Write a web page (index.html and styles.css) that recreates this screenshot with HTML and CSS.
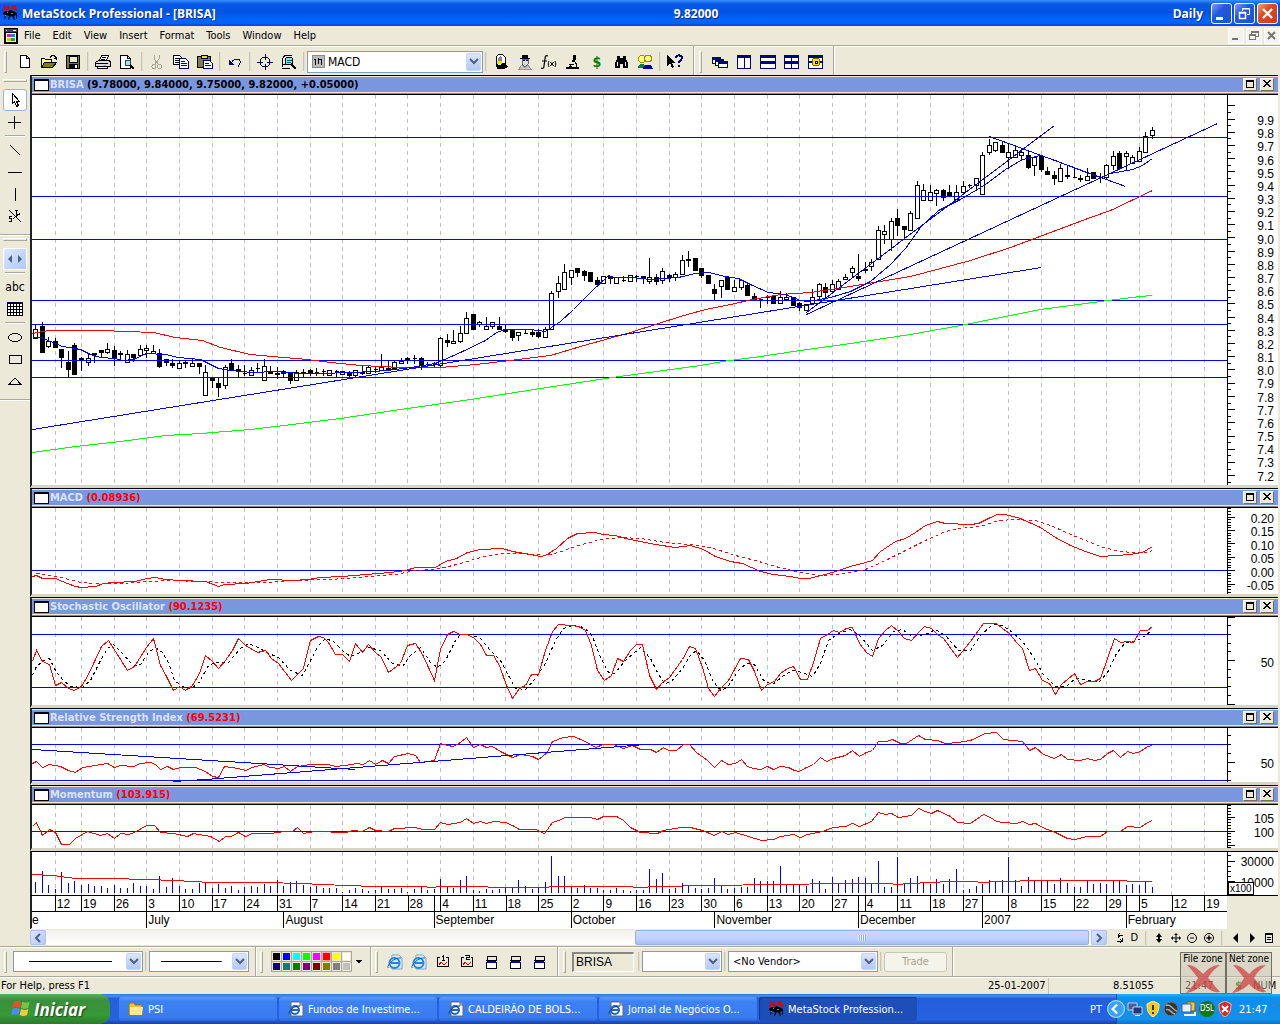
FILE: index.html
```
<!DOCTYPE html>
<html lang="en">
  <head>
    <meta charset="UTF-8" />
    <meta name="viewport" content="width=device-width, initial-scale=1.0" />
    <title>MetaStock Professional - [BRISA]</title>
    <link rel="stylesheet" href="styles.css">
  </head>
  <body>
    <!-- shared icons -->
    <svg class="defs" aria-hidden="true">
      <symbol id="i-ms" viewBox="0 0 16 16">
        <path d="M2.500 7V1l2 3 2-3v5M14 1h-3.500v2.500H14V6" fill="none" stroke="#e00000" stroke-width="1.500" />
        <path d="M1 8l3-2 2 1 2-2 3 1 4 2v5l-1 1v-4l-2 1 1 4h-1l-2-4-2 1-1 3H6l1-4-3-1-1 4H2l1-4-2-1z" fill="#000" />
        <path d="M5 7h1v1H5zM9 8h2v1H9zM3 10h1v1H3z" fill="#4aa" />
      </symbol>
      <symbol id="i-down" viewBox="0 0 10 8"><path d="M1 1l4 4 4-4" fill="none" stroke="#4d6185" stroke-width="2" /></symbol>
      <symbol id="i-max" viewBox="0 0 14 13"><path d="M3.500 2.500h7v7h-7zM3 3.500h8" fill="none" stroke="#000" /></symbol>
      <symbol id="i-close" viewBox="0 0 14 13"><path d="M3 2l7 7M4 2l7 7M10 2L3 9M11 2L4 9" fill="none" stroke="#000" /></symbol>
      <symbol id="i-ie" viewBox="0 0 16 16">
        <path d="M3 1h9l3 3v11H3z" fill="#fff" stroke="#667" /><path d="M12 1v3h3" fill="#ccd" stroke="#667" />
        <ellipse cx="7" cy="9" rx="4" ry="4" fill="#fff" stroke="#1f66c8" stroke-width="2" />
        <path d="M4 9h7" stroke="#1f66c8" stroke-width="2" /><path d="M1 13C0 10 7 4 12 5" fill="none" stroke="#103c90" />
      </symbol>
      <symbol id="i-iebig" viewBox="0 0 16 16">
        <path d="M5 1h7l3 3v11H5z" fill="#dcecfa" stroke="#7aa7d0" />
        <circle cx="7.500" cy="9" r="5" fill="#cfe8fb" stroke="#2d85cf" stroke-width="2" />
        <path d="M4 9h8" stroke="#2d85cf" stroke-width="2" /><path d="M1 14C0 10 8 3 14 4" fill="none" stroke="#2468a8" />
      </symbol>
      <symbol id="i-win" viewBox="0 0 16 16">
        <path d="M3.500 2.500h10v12h-10z" fill="#fff" stroke="#000" /><path d="M2.500 1.500h12v6h-12z" fill="#ece9d8" stroke="none" /><path d="M4.500 7V2.500h9V7" fill="#ece9d8" stroke="#000" /><path d="M3 6h11v1H3z" fill="#000" /><path d="M4 7h9v2H4z" fill="#0000c0" />
      </symbol>
      <symbol id="i-x" viewBox="0 0 40 30">
        <path d="M4 1c6 0 9 2 16 9C26 4 30 1 37 1c-5 4-9 7-12 13 4 5 8 9 12 14-7 1-12-3-17-8-5 5-10 8-17 9 4-5 9-9 12-15C11 9 8 5 4 1z" fill="#d03a3a" />
      </symbol>
    </svg>

    <header class="titlebar">
      <div class="title-left"><svg class="icon"><use href="#i-ms" /></svg><h1>MetaStock Professional - [BRISA]</h1></div>
      <span>9.82000</span>
      <div class="title-right">
        <span>Daily</span>
        <button class="win-btn" aria-label="Minimize"><svg viewBox="0 0 19 19"><path d="M4 13h7v3H4z" fill="#fff" /></svg></button>
        <button class="win-btn" aria-label="Restore"><svg viewBox="0 0 19 19"><path d="M7.500 7V4.500h7v6H12M7 5h8" fill="none" stroke="#fff" /><path d="M4.500 8.500h6v6h-6zM4 9h7" fill="none" stroke="#fff" stroke-width="1.500" /></svg></button>
        <button class="win-btn win-close" aria-label="Close"><svg viewBox="0 0 19 19"><path d="M5 5l9 9M14 5l-9 9" stroke="#fff" stroke-width="2.300" /></svg></button>
      </div>
    </header>

    <nav class="menubar">
      <svg class="icon crisp" viewBox="0 0 16 16"><path d="M1 0h14v16H1z" fill="#000" /><path d="M2 1h12v3H2z" fill="#404060" /><path d="M3 2h1v1H3zM10 2h3v1h-3z" fill="#fff" /><path d="M3 5h10v9H3z" fill="#fff" /><path d="M4 6h4v3H4z" fill="#e020a0" /><path d="M8 6h4v3H8z" fill="#2080e0" /><path d="M4 10h4v3H4z" fill="#d0c020" /><path d="M8 10h4v3H8z" fill="#20a040" /></svg>
      <button>File</button><button>Edit</button><button>View</button><button>Insert</button><button>Format</button><button>Tools</button><button>Window</button><button>Help</button>
      <div class="mdi-btns">
        <button aria-label="Minimize chart"><svg class="crisp" viewBox="0 0 14 14"><path d="M3 9h6v2H3z" fill="#77776c" /></svg></button>
        <button aria-label="Restore chart"><svg class="crisp" viewBox="0 0 14 14"><path d="M4.500 5V2.500h7v5H9M4 3.500h8M2.500 6.500h6v4h-6zM2 5.500h7" fill="none" stroke="#77776c" /></svg></button>
        <button aria-label="Close chart"><svg viewBox="0 0 14 14"><path d="M3 3l7 7M10 3l-7 7" stroke="#77776c" stroke-width="2" /></svg></button>
      </div>
    </nav>

    <div class="toolrow">
      <div class="toolbar">
        <i class="grip"></i>
        <button class="tool" aria-label="New"><svg class="crisp" viewBox="0 0 16 16"><path d="M3.500 1.500h6l3 3v9h-9zM9.500 1.500v3h3" fill="#fff" stroke="#000" /></svg></button>
        <button class="tool" aria-label="Open"><svg class="crisp" viewBox="0 0 16 16"><path d="M.5 13.500v-9h3l1 1h6v3" fill="#ffffa0" stroke="#000" /><path d="M.5 13.500l3-5h12l-4 5z" fill="#808000" stroke="#000" /><path d="M9 3.500l2-2h2l2 2v2M13 4.500h2" fill="none" stroke="#000" /></svg></button>
        <button class="tool" aria-label="Save"><svg class="crisp" viewBox="0 0 16 16"><path d="M1.500 1.500h13v13h-13z" fill="#808000" stroke="#000" /><path d="M4 2h8v6H4z" fill="#ece9d8" stroke="#000" /><path d="M4 10h9v4H4z" fill="#000" /><path d="M10 11h2v3h-2z" fill="#fff" /></svg></button>
        <i class="sep"></i>
        <button class="tool" aria-label="Print"><svg class="crisp" viewBox="0 0 16 16"><path d="M4.500 6.500l2-5h7l-2 5z" fill="#fff" stroke="#000" /><path d="M.5 8.500l3-2h11l1 2v4h-15z" fill="#ddd" stroke="#000" /><path d="M7 3h4M6 5h4M1 9.500h12M3 12h9" stroke="#000" /><path d="M2.500 12.500h10v2h-10z" fill="#fff" stroke="#000" /><path d="M9 11h2v1H9z" fill="#cc0" /></svg></button>
        <button class="tool" aria-label="Print preview"><svg class="crisp" viewBox="0 0 16 16"><path d="M1.500 1.500h7l3 3v10h-10zM8.500 1.500v3h3" fill="#fff" stroke="#000" /><circle cx="9" cy="9" r="3" fill="#a0e8f0" stroke="#444" /><path d="M11 11l4 4" stroke="#000" stroke-width="2" /></svg></button>
        <i class="sep"></i>
        <button class="tool" aria-label="Cut"><svg class="crisp" viewBox="0 0 16 16"><path d="M5 1v4l5 6M10 1v4l-5 6" fill="none" stroke="#aca899" /><circle cx="5" cy="12.500" r="2" fill="none" stroke="#aca899" /><circle cx="10.500" cy="12.500" r="2" fill="none" stroke="#aca899" /></svg></button>
        <button class="tool" aria-label="Copy"><svg class="crisp" viewBox="0 0 16 16"><path d="M.5 1.500h6l2 2v7h-8z" fill="#fff" stroke="#000" /><path d="M2 4h4M2 6h4M2 8h4" stroke="#000" /><path d="M6.500 4.500h6l3 3v7h-9z" fill="#fff" stroke="#000080" /><path d="M8 7.500h4M8 9.500h6M8 11.500h6" stroke="#000080" /></svg></button>
        <button class="tool" aria-label="Paste"><svg class="crisp" viewBox="0 0 16 16"><path d="M.5 2.500h13v11H.5z" fill="#808040" stroke="#000" /><path d="M4 1h6v3H4z" fill="#e8e040" stroke="#000" /><path d="M6.500 6.500h6l3 3v5h-9z" fill="#fff" stroke="#000080" /><path d="M8 9.500h4M8 11.500h6" stroke="#000080" /></svg></button>
        <i class="sep"></i>
        <button class="tool" aria-label="Undo"><svg class="crisp" viewBox="0 0 16 16"><path d="M4 9c2-4 8-5 9-2 1 3-1 4-2 6" fill="none" stroke="#000080" /><path d="M2 6v5h5z" fill="#000080" /></svg></button>
        <i class="sep"></i>
        <button class="tool" aria-label="Crosshair"><svg class="crisp" viewBox="0 0 16 16"><circle cx="8" cy="8" r="5" fill="none" stroke="#000040" /><path d="M8 0v6M8 10v6M0 8h6M10 8h6" stroke="#000040" /></svg></button>
        <button class="tool" aria-label="Zoom"><svg class="crisp" viewBox="0 0 16 16"><path d="M1 13V6l3-5h7M1 14h8M1 10h4" fill="none" stroke="#000" /><circle cx="8" cy="7" r="4" fill="#80e8e8" stroke="#000" /><path d="M6 6h5M6 8h4" stroke="#066" /><path d="M10 10l5 5" stroke="#000" stroke-width="2" /></svg></button>
        <i class="sep"></i>
        <div class="combo combo-indicator">
          <svg class="crisp" viewBox="0 0 14 14"><path d="M.5 .5h13v13H.5z" fill="#bbb" stroke="#888" /><path d="M3.500 4v7M6.500 3v7M7.500 5h2M10.500 4v7M2 5h2" stroke="#000" fill="none" /></svg>
          <select aria-label="Indicator"><option>MACD</option></select>
          <span class="combo-arrow"><svg><use href="#i-down" /></svg></span>
        </div>
        <i class="sep"></i>
        <button class="tool" aria-label="Expert"><svg class="crisp" viewBox="0 0 16 16"><path d="M3 3l3-3h3l3 3v6H3z" fill="#fff" stroke="#000" /><path d="M5 4l2-2 2 2v6H5z" fill="#888" /><path d="M4 7h5v3H4z" fill="#e8e000" /><path d="M3 10l4 1 4-2 4 4-4 2H4z" fill="#000" /></svg></button>
        <button class="tool" aria-label="Explorer"><svg class="crisp" viewBox="0 0 16 16"><path d="M5 1h6v3H5zM3 4h10v1H3z" fill="#000" /><path d="M5 5h6v5l-2 2H7l-2-2z" fill="#ddd" stroke="#666" /><path d="M6 6h2v1H6zM9 6h2v1H9z" fill="#008" /><path d="M2 15l3-4 3 3 3-3 3 4z" fill="#ccc8b8" stroke="#999" /></svg></button>
        <button class="tool" aria-label="Indicator builder"><svg viewBox="0 0 16 16"><path d="M7 2c-2-1-3 0-3 3l-1 7c0 2-1 3-3 2M1 7h5" fill="none" stroke="#000" stroke-width="1.200" /><path d="M8 7c-1 2-1 4 0 6M14 7c1 2 1 4 0 6M9.500 8l3 4M12.500 8l-3 4" fill="none" stroke="#000" /></svg></button>
        <button class="tool" aria-label="System tester"><svg class="crisp" viewBox="0 0 16 16"><path d="M8 1h3v3l-1 4H7l1-4zM10 8l2 2v3h-1v-3L9 9zM4 10h5v1H4zM5 11l2 2H3zM1 13h13v2H1z" fill="#000" /></svg></button>
        <button class="tool tool-money" aria-label="OptionScope">$</button>
        <button class="tool" aria-label="Find"><svg class="crisp" viewBox="0 0 16 16"><path d="M4 2h3v2h3V2h3v3l2 4v5h-5v-4H7v4H2V9l2-4z" fill="#000" /><path d="M4 8h1v4H4zM12 8h1v4h-1z" fill="#fff" /></svg></button>
        <button class="tool" aria-label="Users"><svg class="crisp" viewBox="0 0 16 16"><circle cx="5" cy="5" r="3.500" fill="#ffff80" stroke="#a09000" /><circle cx="11" cy="4.500" r="3.500" fill="#ffff80" stroke="#a09000" /><path d="M1 14c0-5 5-5 8-2v2z" fill="#008040" /><path d="M6 15c0-6 9-6 10 0z" fill="#0000a0" /></svg></button>
        <i class="sep"></i>
        <button class="tool" aria-label="Context help"><svg class="crisp" viewBox="0 0 16 16"><path d="M0 1v11l3-3 2 5 2-1-2-4h3z" fill="#000" /><path d="M9 4c0-4 6-3 6 0 0 2-3 2-3 5M12 11v2" fill="none" stroke="#000080" stroke-width="2" /></svg></button>
      </div>
      <div class="toolbar toolbar-end">
        <i class="grip"></i>
        <button class="tool" aria-label="Cascade"><svg class="crisp" viewBox="0 0 16 16"><g fill="#fff" stroke="#000080"><path d="M.5 3.500h8v6h-8z" /><path d="M3.500 5.500h8v6h-8z" /><path d="M6.500 7.500h9v6h-9z" /></g><path d="M0 3h9v3H0zM3 5h9v3H3zM6 7h10v3H6z" fill="#000080" /></svg></button>
        <button class="tool" aria-label="Stack columns"><svg class="crisp" viewBox="0 0 16 16"><path d="M1.500 1.500h13v13h-13zM8 2v12" fill="#fff" stroke="#000080" /><path d="M1 1h14v3H1z" fill="#000080" /></svg></button>
        <button class="tool" aria-label="Stack rows"><svg class="crisp" viewBox="0 0 16 16"><path d="M.5 1.500h15v13H.5z" fill="#fff" stroke="#000080" /><path d="M0 1h16v3H0zM0 7h16v3H0z" fill="#000080" /></svg></button>
        <button class="tool" aria-label="Tile"><svg class="crisp" viewBox="0 0 16 16"><path d="M.5 1.500h14v13H.5zM7.500 2v12" fill="#fff" stroke="#000080" /><path d="M0 1h15v3H0zM0 7h15v3H0z" fill="#000080" /></svg></button>
        <button class="tool" aria-label="Layout options"><svg class="crisp" viewBox="0 0 16 16"><path d="M.5 1.500h14v13H.5z" fill="#fff" stroke="#000080" /><path d="M0 1h15v3H0zM0 7h15v2H0z" fill="#000080" /><circle cx="8" cy="8" r="4" fill="#f0e020" stroke="#806000" /><path d="M7 7h2v2H7z" fill="#fff" stroke="#000" /></svg></button>
      </div>
    </div>

    <main class="workspace">
      <aside class="sidebar">
        <div class="side-group">
          <i class="hgrip"></i>
          <button class="side selected" aria-label="Pointer"><svg class="crisp" viewBox="0 0 16 16"><path d="M5.500 1.500v10l2-2 2 5 2-1-2-4h3z" fill="#fff" stroke="#000" /></svg></button>
          <button class="side" aria-label="Crosshair"><svg class="crisp" viewBox="0 0 16 16"><path d="M1 8.500h13M7.500 2v13" stroke="#000" /></svg></button>
          <i class="hsep"></i>
          <button class="side" aria-label="Trendline"><svg class="crisp" viewBox="0 0 16 16"><path d="M3 3l10 10" stroke="#000" /></svg></button>
          <button class="side" aria-label="Horizontal line"><svg class="crisp" viewBox="0 0 16 16"><path d="M1 8.500h14" stroke="#000" /></svg></button>
          <button class="side" aria-label="Vertical line"><svg class="crisp" viewBox="0 0 16 16"><path d="M8.500 2v13" stroke="#000" /></svg></button>
          <button class="side" aria-label="Speed lines"><svg class="crisp" viewBox="0 0 16 16"><path d="M2 2l12 12M13 5L6 11M9.500 2v4M9 6.500h4M8 2.500h3M5 8.500H2.500v2h2v3H2" fill="none" stroke="#000" /></svg></button>
        </div>
        <div class="side-group">
          <i class="hgrip"></i>
          <button class="side pressed" aria-label="Scroll"><svg viewBox="0 0 16 16"><path d="M5 4v8L1 8zM11 4v8l4-4z" fill="#4d6185" /></svg></button>
          <i class="hsep"></i>
          <button class="side side-text">abc</button>
          <button class="side" aria-label="Grid"><svg class="crisp" viewBox="0 0 16 16"><path d="M.5 1.500h15v13H.5zM3.500 2v12M6.500 2v12M9.500 2v12M12.500 2v12M0 5.500h16M0 8.500h16M0 11.500h16" fill="#fff" stroke="#000" /><path d="M0 1h16v2H0z" fill="#000040" /></svg></button>
          <i class="hsep"></i>
          <button class="side" aria-label="Ellipse"><svg class="crisp" viewBox="0 0 16 16"><ellipse cx="8" cy="8.500" rx="6.500" ry="4" fill="none" stroke="#000" /></svg></button>
          <button class="side" aria-label="Rectangle"><svg class="crisp" viewBox="0 0 16 16"><path d="M2.500 4.500h12v8h-12z" fill="none" stroke="#000" /></svg></button>
          <button class="side" aria-label="Triangle"><svg class="crisp" viewBox="0 0 16 16"><path d="M8 5l-6 6.500h12z" fill="none" stroke="#000" /></svg></button>
        </div>
      </aside>

      <section class="charts">
        <article class="panel panel-price">
          <header class="panel-head"><i class="panel-icon"></i><h2>BRISA <b class="quote">(9.78000, 9.84000, 9.75000, 9.82000, +0.05000)</b></h2><button aria-label="Maximize"><svg class="crisp"><use href="#i-max" /></svg></button><button aria-label="Close"><svg class="crisp"><use href="#i-close" /></svg></button></header>
          <div class="panel-body"><svg class="plot" id="price"></svg><div class="axis"><svg class="ticks"></svg><div class="labels" id="priceLabels"></div></div></div>
        </article>
        <article class="panel panel-macd">
          <header class="panel-head"><i class="panel-icon"></i><h2>MACD <b>(0.08936)</b></h2><button aria-label="Maximize"><svg class="crisp"><use href="#i-max" /></svg></button><button aria-label="Close"><svg class="crisp"><use href="#i-close" /></svg></button></header>
          <div class="panel-body"><svg class="plot" id="macd"></svg><div class="axis"><svg class="ticks"></svg><div class="labels"><span>0.20</span><span>0.15</span><span>0.10</span><span>0.05</span><span>0.00</span><span>-0.05</span></div></div></div>
        </article>
        <article class="panel panel-stoch">
          <header class="panel-head"><i class="panel-icon"></i><h2>Stochastic Oscillator <b>(90.1235)</b></h2><button aria-label="Maximize"><svg class="crisp"><use href="#i-max" /></svg></button><button aria-label="Close"><svg class="crisp"><use href="#i-close" /></svg></button></header>
          <div class="panel-body"><svg class="plot" id="stoch"></svg><div class="axis"><svg class="ticks"></svg><div class="labels"><span>50</span></div></div></div>
        </article>
        <article class="panel panel-rsi">
          <header class="panel-head"><i class="panel-icon"></i><h2>Relative Strength Index <b>(69.5231)</b></h2><button aria-label="Maximize"><svg class="crisp"><use href="#i-max" /></svg></button><button aria-label="Close"><svg class="crisp"><use href="#i-close" /></svg></button></header>
          <div class="panel-body"><svg class="plot" id="rsi"></svg><div class="axis"><svg class="ticks"></svg><div class="labels"><span>50</span></div></div></div>
        </article>
        <article class="panel panel-momentum">
          <header class="panel-head"><i class="panel-icon"></i><h2>Momentum <b>(103.915)</b></h2><button aria-label="Maximize"><svg class="crisp"><use href="#i-max" /></svg></button><button aria-label="Close"><svg class="crisp"><use href="#i-close" /></svg></button></header>
          <div class="panel-body"><svg class="plot" id="momentum"></svg><div class="axis"><svg class="ticks"></svg><div class="labels"><span>105</span><span>100</span></div></div></div>
        </article>
        <article class="panel panel-volume">
          <div class="panel-body"><svg class="plot" id="volume"></svg><div class="axis"><svg class="ticks"></svg><div class="labels"><span>30000</span><span>10000</span></div><span class="multiplier">x100</span></div></div>
        </article>
        <div class="dates">
          <div class="date-row" id="weeks"></div>
          <div class="date-row" id="months"></div>
        </div>

        <div class="scroll-row">
          <button class="scroll-btn" aria-label="Scroll left"><svg viewBox="0 0 8 10"><path d="M6 1L2 5l4 4" fill="none" stroke="#4d6185" stroke-width="2" /></svg></button>
          <div class="scroll-track"><div class="scroll-thumb"><i></i></div></div>
          <button class="scroll-btn" aria-label="Scroll right"><svg viewBox="0 0 8 10"><path d="M2 1l4 4-4 4" fill="none" stroke="#4d6185" stroke-width="2" /></svg></button>
          <div class="scroll-tools">
            <button aria-label="Refresh"><svg class="crisp" viewBox="0 0 12 12"><path d="M9 3H4v3M3 9h5V6M6 1l-2 2 2 2M6 7l2 2-2 2" fill="none" stroke="#000" /></svg></button>
            <button class="daily">D</button>
            <i class="sep"></i>
            <button aria-label="Vertical scale"><svg viewBox="0 0 12 12"><path d="M6 1l3 4H7v2h2l-3 4-3-4h2V5H3z" fill="#000" /></svg></button>
            <button aria-label="Move"><svg viewBox="0 0 12 12"><path d="M6 2v8M2 6h8" stroke="#000" /><path d="M6 1l2 2H4zM6 11l2-2H4zM1 6l2-2v4zM11 6L9 4v4z" fill="#000" /></svg></button>
            <button aria-label="Zoom out"><svg viewBox="0 0 12 12"><circle cx="6" cy="6" r="4.500" fill="none" stroke="#000" /><path d="M4 6h4" stroke="#000" /></svg></button>
            <button aria-label="Zoom in"><svg viewBox="0 0 12 12"><circle cx="6" cy="6" r="4.500" fill="none" stroke="#000" /><path d="M3.500 6h5M6 3.500v5" stroke="#000" stroke-width="1.500" /></svg></button>
            <i class="sep"></i>
            <button aria-label="Previous"><svg viewBox="0 0 12 12"><path d="M8 1v10L3 6z" fill="#000" /></svg></button>
            <button aria-label="Next"><svg viewBox="0 0 12 12"><path d="M4 1v10l5-5z" fill="#000" /></svg></button>
            <button aria-label="Chart list"><svg class="crisp" viewBox="0 0 12 12"><path d="M2.500 1.500h7v9h-7zM2 2.500h8M4 5.500h4M4 7.500h4" fill="none" stroke="#000" /></svg></button>
          </div>
        </div>
      </section>
    </main>

    <div class="toolrow toolrow-bottom">
      <div class="toolbar">
        <i class="grip"></i>
        <div class="combo combo-line"><select aria-label="Line style"><option></option></select><span class="combo-arrow"><svg><use href="#i-down" /></svg></span></div>
        <i class="sep"></i>
        <div class="combo combo-weight"><select aria-label="Line weight"><option></option></select><span class="combo-arrow"><svg><use href="#i-down" /></svg></span></div>
      </div>
      <div class="toolbar toolbar-colors">
        <i class="grip"></i>
        <div class="palette">
          <button class="c-black" aria-label="Black"></button><button class="c-blue" aria-label="Blue"></button><button class="c-cyan" aria-label="Cyan"></button><button class="c-lime" aria-label="Lime"></button><button class="c-magenta" aria-label="Magenta"></button><button class="c-red current" aria-label="Red"></button><button class="c-yellow" aria-label="Yellow"></button><button class="c-white" aria-label="White"></button>
          <button class="c-navy" aria-label="Navy"></button><button class="c-teal" aria-label="Teal"></button><button class="c-green" aria-label="Green"></button><button class="c-purple" aria-label="Purple"></button><button class="c-maroon" aria-label="Maroon"></button><button class="c-olive" aria-label="Olive"></button><button class="c-gray" aria-label="Gray"></button><button class="c-silver" aria-label="Silver"></button>
        </div>
        <button class="more" aria-label="More colors"><svg class="crisp" viewBox="0 0 6 4"><path d="M0 0h6L3 4z" fill="#000" /></svg></button>
      </div>
      <div class="toolbar toolbar-web">
        <i class="grip"></i>
        <button class="tool" aria-label="Web page"><svg><use href="#i-iebig" /></svg></button>
        <button class="tool" aria-label="Web search"><svg><use href="#i-iebig" /></svg></button>
        <button class="tool" aria-label="Chart 1"><svg class="crisp" viewBox="0 0 16 16"><path d="M5 3.500H2.500v9h11v-9H11M8.500 1v5M7 2.500h1M7 6.500h3" fill="none" stroke="#000" /><path d="M4 11l2-3 3 3 3-3" fill="none" stroke="#d00000" /></svg></button>
        <button class="tool" aria-label="Chart 2"><svg class="crisp" viewBox="0 0 16 16"><path d="M5 3.500H2.500v9h11v-9H12M6 1.500h4v2H7.500v2H11" fill="none" stroke="#000" /><path d="M4 11l2-3 3 3 3-3" fill="none" stroke="#d00000" /></svg></button>
        <button class="tool" aria-label="Window 1"><svg class="crisp"><use href="#i-win" /></svg></button>
        <button class="tool" aria-label="Window 2"><svg class="crisp"><use href="#i-win" /></svg></button>
        <button class="tool" aria-label="Window 3"><svg class="crisp"><use href="#i-win" /></svg></button>
      </div>
      <div class="toolbar toolbar-end">
        <i class="grip"></i>
        <input class="symbol" type="text" value="BRISA" aria-label="Symbol">
        <i class="sep"></i>
        <div class="combo combo-small"><select aria-label="Account"><option></option></select><span class="combo-arrow"><svg><use href="#i-down" /></svg></span></div>
        <i class="sep"></i>
        <div class="combo combo-vendor"><select aria-label="Vendor"><option>&lt;No Vendor&gt;</option></select><span class="combo-arrow"><svg><use href="#i-down" /></svg></span></div>
        <i class="sep"></i>
        <button class="trade" disabled>Trade</button>
      </div>
    </div>

    <div class="statusbar">
      <span class="status-help">For Help, press F1</span>
      <span class="status-date">25-01-2007</span>
      <span class="status-price">8.51055</span>
      <span class="status-time">21:47</span>
      <span class="status-money">$</span>
      <span class="status-num">NUM</span>
      <div class="zones">
        <div class="zone"><span>File zone</span><svg><use href="#i-x" /></svg></div>
        <div class="zone"><span>Net zone</span><svg><use href="#i-x" /></svg></div>
      </div>
    </div>

    <footer class="taskbar">
      <button class="start"><svg viewBox="0 0 18 18"><path d="M3 3c2-1 4-1 6 0L8 8C6 7 4 7 2 8z" fill="#e8502c" /><path d="M10 3c2 1 4 1 6 0l-1 5c-2 1-4 1-6 0z" fill="#7cc242" /><path d="M2 9c2-1 4-1 6 0l-1 5c-2-1-4-1-6 0z" fill="#4a8df0" /><path d="M9 9c2 1 4 1 6 0l-1 5c-2 1-4 1-6 0z" fill="#f8cc30" /></svg>Iniciar</button>
      <div class="tasks">
        <button class="task"><svg class="icon" viewBox="0 0 16 16"><path d="M1 4l1-2h4l1 2h7v10H1z" fill="#f0c040" stroke="#a07810" /><path d="M2 6h13l-1 8H2z" fill="#ffe890" /></svg>PSI</button>
        <button class="task"><svg class="icon"><use href="#i-ie" /></svg>Fundos de Investime...</button>
        <button class="task"><svg class="icon"><use href="#i-ie" /></svg>CALDEIRÃO DE BOLS...</button>
        <button class="task"><svg class="icon"><use href="#i-ie" /></svg>Jornal de Negócios O...</button>
        <button class="task active"><svg class="icon"><use href="#i-ms" /></svg>MetaStock Profession...</button>
      </div>
      <span class="lang">PT</span>
      <div class="tray">
        <button class="tray-toggle" aria-label="Show hidden icons"><svg viewBox="0 0 16 16"><circle cx="8" cy="8" r="7.500" fill="#3aa0f4" stroke="#a8dcff" /><path d="M9 4L5 8l4 4" fill="none" stroke="#fff" stroke-width="2" /></svg></button>
        <svg class="icon" viewBox="0 0 16 16"><path d="M1 2h9v7H1z" fill="#4060a0" stroke="#ccd" /><path d="M6 6h9v7H6z" fill="#203880" stroke="#ccd" /><path d="M8 14h5v1H8z" fill="#ddd" /></svg>
        <svg class="icon" viewBox="0 0 16 16"><path d="M8 0l6 3c0 6-1 10-6 13C3 13 2 9 2 3z" fill="#f4c820" stroke="#fff0a0" /><path d="M7 4h2v5H7zM7 11h2v2H7z" fill="#333" /></svg>
        <svg class="icon" viewBox="0 0 16 16"><circle cx="8" cy="8" r="7" fill="#333" stroke="#777" /><path d="M3 5c3-4 8 5 11 5M3 9c3-3 6 4 9 4" fill="none" stroke="#aaa" stroke-width="1.500" /></svg>
        <svg class="icon" viewBox="0 0 16 16"><path d="M6 1h8v9H6z" fill="#f0c830" stroke="#806000" /><path d="M1 3h9v8H1z" fill="#e8f0ff" stroke="#3860a8" /><path d="M3 14h11v-3" fill="none" stroke="#fff" stroke-width="2" /></svg>
        <span class="dsl">DSL</span>
        <svg class="icon" viewBox="0 0 16 16"><path d="M8 0l6 3c0 6-1 10-6 13C3 13 2 9 2 3z" fill="#d42a2a" stroke="#ffb0a0" /><path d="M5 5l6 6M11 5l-6 6" stroke="#fff" stroke-width="2" /></svg>
        <time>21:47</time>
      </div>
    </footer>
    <script src="charts.js"></script>
  </body>
</html>
```

FILE: styles.css
```
* {
  box-sizing: border-box;
}
body {
  margin: 0;
  min-height: 100vh;
  display: flex;
  flex-direction: column;
  background-color: #ece9d8;
  font-family: "DejaVu Sans Condensed", "Liberation Sans", sans-serif;
  font-size: 11px;
  color: #000;
  overflow: hidden;
}
button,
input,
select {
  font: inherit;
  color: inherit;
  margin: 0;
  padding: 0;
  border: 0;
  background: none;
}
svg {
  display: block;
}
.defs {
  display: none;
}
.crisp {
  shape-rendering: crispEdges;
}
.icon {
  width: 16px;
  height: 16px;
  flex: none;
}

/* title bar */
.titlebar {
  height: 26px;
  display: flex;
  align-items: center;
  padding: 0 2px;
  background: linear-gradient(#3a93ff 0, #0a58e6 15%, #0054e3 45%, #0366fd 80%, #0060f4 92%, #003bc0 100%);
  color: #fff;
  font-family: "Open Sans", "Noto Sans", sans-serif;
  font-size: 12px;
  font-weight: bold;
  text-shadow: 1px 1px 0 #0a2a80;
}
.title-left {
  flex: 6 1 0;
  display: flex;
  align-items: center;
  gap: 4px;
}
.titlebar h1 {
  margin: 0;
  font-size: 12px;
}
.title-right {
  flex: 5 1 0;
  display: flex;
  align-items: center;
  justify-content: flex-end;
  gap: 2px;
}
.title-right span {
  margin-right: 6px;
}
.win-btn {
  width: 21px;
  height: 21px;
  border: 1px solid #fff;
  border-radius: 3px;
  background: linear-gradient(135deg, #7b9ef0, #2458dc 40%, #1c50d8);
}
.win-close {
  background: linear-gradient(135deg, #f0a080, #dc4a20 40%, #d03c10);
}

/* menu */
.menubar {
  height: 19px;
  display: flex;
  align-items: center;
  padding-left: 3px;
  gap: 12px;
}
.menubar .icon {
  margin-right: -7px;
}
.mdi-btns {
  margin-left: auto;
  display: flex;
  gap: 2px;
}
.mdi-btns button {
  width: 16px;
  height: 16px;
  background: #f4f3ec;
  border: 1px solid #fff;
}

/* toolbars */
.toolrow {
  height: 30px;
  display: flex;
  border-top: 1px solid #aca899;
  box-shadow: inset 0 1px 0 #fff;
  flex: none;
}
.toolbar {
  display: flex;
  align-items: center;
  padding: 2px 6px 0 4px;
  border-right: 1px solid #aca899;
  box-shadow: 1px 0 0 #fff;
}
.toolbar-end {
  padding-left: 5px;
  padding-right: 5px;
}
.grip {
  width: 3px;
  height: 22px;
  border: 1px solid #aca899;
  border-left-color: #fff;
  border-top-color: #fff;
  margin-right: 6px;
}
.sep {
  width: 2px;
  height: 19px;
  margin: 0 2px;
  background: #c9c5b2;
  border-right: 1px solid #e2dfcf;
}
.tool {
  width: 24px;
  height: 22px;
  display: flex;
  align-items: center;
  justify-content: center;
}
.tool svg {
  width: 16px;
  height: 16px;
}
.tool-money {
  color: #008000;
  font-size: 14px;
  font-weight: bold;
}
.combo {
  display: flex;
  align-items: center;
  height: 22px;
  padding: 1px;
  background: #fff;
  border: 1px solid #7f9db9;
}
.combo select {
  flex: 1;
  min-width: 0;
  height: 100%;
  padding: 0 3px;
  appearance: none;
}
.combo-arrow {
  width: 15px;
  align-self: stretch;
  display: flex;
  align-items: center;
  justify-content: center;
  background: linear-gradient(#dce6fd, #b4c8f6);
  border: 1px solid #c5d4f8;
  border-radius: 2px;
  pointer-events: none;
}
.combo-arrow svg {
  width: 10px;
  height: 8px;
}
.combo-indicator {
  width: 176px;
  padding-left: 4px;
}
.combo-indicator > svg {
  width: 13px;
  height: 13px;
}
.combo-indicator select {
  font-size: 12px;
}

/* drawing tools on the left */
.workspace {
  flex: 1;
  min-height: 0;
  display: flex;
}
.sidebar {
  width: 30px;
  padding-top: 1px;
}
.side-group {
  display: flex;
  flex-direction: column;
  align-items: center;
  padding: 3px 0 7px;
  border-bottom: 1px solid #aca899;
  box-shadow: 0 1px 0 #fff;
}
.hgrip {
  width: 24px;
  height: 3px;
  border: 1px solid #aca899;
  border-left-color: #fff;
  border-top-color: #fff;
  margin-bottom: 7px;
}
.hsep {
  width: 20px;
  height: 2px;
  margin: 2px 0;
  background: #aca899;
  border-bottom: 1px solid #fff;
}
.side {
  width: 24px;
  height: 22px;
  display: flex;
  align-items: center;
  justify-content: center;
}
.side svg {
  width: 16px;
  height: 16px;
}
.side-text {
  font-size: 12px;
}
.selected {
  background: #fff;
  border: 1px solid #98b5d8;
  border-radius: 3px;
}
.pressed {
  background: linear-gradient(135deg, #dce8ff, #b0c8f8);
  border: 1px solid #fff;
}

/* chart panels */
.charts {
  flex: 1;
  min-width: 0;
  display: flex;
  flex-direction: column;
  padding-right: 2px;
}
.panel {
  min-height: 0;
  flex-basis: 23px;
  display: flex;
  flex-direction: column;
  border-top: 1px solid #000;
  border-left: 2px solid #222;
  border-bottom: 3px solid #d8d5c5;
  background: #fff;
}
.panel-price {
  flex-grow: 390;
}
.panel-macd {
  flex-grow: 86;
}
.panel-stoch {
  flex-grow: 88;
}
.panel-rsi {
  flex-grow: 54;
}
.panel-momentum {
  flex-grow: 43;
}
.panel-volume {
  flex-basis: 2px;
  flex-grow: 43;
  border-bottom: 1px solid #000;
}
.panel-head {
  height: 19px;
  flex: none;
  display: flex;
  align-items: center;
  gap: 3px;
  padding: 0 4px 1px 2px;
  background: #7a96df;
  border-top: 1px solid #ece9d8;
  border-bottom: 1px solid #000;
  box-shadow: inset 0 -1px 0 #8a887c, inset 0 -2px 0 #ece9d8;
}
.panel-head h2 {
  flex: 1;
  margin: 0 0 0 -2px;
  font-size: 11px;
  line-height: 14px;
  color: #d8e4f8;
}
.panel-head b {
  color: #f00;
}
.panel-head .quote {
  color: #000;
}
.panel-icon {
  width: 15px;
  height: 12px;
  background: #fff;
  border: 1px solid #000;
  border-top-width: 2px;
}
.panel-head button {
  width: 14px;
  height: 13px;
  margin-bottom: 2px;
  background: #ece9d8;
  border: 1px solid #fff;
  border-right-color: #716f64;
  border-bottom-color: #716f64;
}
.panel-head button svg {
  width: 14px;
  height: 13px;
  margin: -1px;
}
.panel-body {
  flex: 1 1 0;
  min-height: 0;
  display: flex;
}
.plot {
  flex: 1 1 0;
  min-width: 0;
  min-height: 0;
  shape-rendering: crispEdges;
}
.plot line,
.plot path,
.plot polyline {
  fill: none;
  vector-effect: non-scaling-stroke;
}
.plot .grid {
  stroke: #c0c0c0;
  stroke-dasharray: 4 4;
}
.plot .blue {
  stroke: #0000ff;
}
.plot .red {
  stroke: #ff0000;
}
.plot .green {
  stroke: #00ff00;
}
.plot .black {
  stroke: #000;
}
.plot .dashed {
  stroke-dasharray: 3 3;
}
.plot .up {
  fill: #fff;
  stroke: #000;
}
.plot .down {
  fill: #000;
  stroke: #000;
}
.axis {
  width: 51px;
  position: relative;
  display: flex;
  font-family: "Liberation Sans", Arial, sans-serif;
  font-size: 12px;
  line-height: 13px;
}
.ticks {
  width: 9px;
  min-height: 0;
  shape-rendering: crispEdges;
}
.labels {
  flex: 1;
  display: flex;
  flex-direction: column;
  align-items: flex-end;
  padding-right: 4px;
}
.panel-price .labels {
  justify-content: space-between;
  padding-top: 20px;
  padding-bottom: 1px;
}
.panel-macd .labels {
  justify-content: space-between;
  padding-top: 5px;
  padding-bottom: 1px;
}
.panel-stoch .labels {
  justify-content: center;
  padding-top: 4px;
}
.panel-rsi .labels {
  padding-top: 30px;
}
.panel-momentum .labels {
  padding-top: 8px;
  gap: 1px;
}
.panel-volume .labels {
  padding-top: 4px;
  gap: 8px;
}
.multiplier {
  position: absolute;
  left: 1px;
  bottom: 0;
  padding: 0 1px;
  font-size: 10px;
  line-height: 11px;
  background: #fff;
  border: 1px solid #000;
}

/* date axis */
.dates {
  flex: none;
  margin-right: 51px;
  border-left: 2px solid #222;
  border-bottom: 1px solid #fff;
  background: #fff;
  font-family: "Liberation Sans", Arial, sans-serif;
  font-size: 12px;
}
.date-row {
  height: 16px;
  display: flex;
  line-height: 17px;
  border-bottom: 1px solid #000;
}
.date-row + .date-row {
  border-bottom: 0;
}
.date-row span {
  min-width: 0;
  flex-basis: 0;
  text-indent: 2px;
  box-shadow: inset 1px 0 0 #000;
  white-space: nowrap;
}
.date-row span:first-child {
  box-shadow: none;
  text-indent: 0;
}

/* scroll bar under the charts */
.scroll-row {
  flex: none;
  height: 17px;
  display: flex;
  align-items: center;
}
.scroll-btn {
  width: 16px;
  height: 15px;
  display: flex;
  align-items: center;
  justify-content: center;
  background: linear-gradient(135deg, #dce6fd, #b4c8f6);
  border: 1px solid #b0c4f0;
  border-radius: 2px;
}
.scroll-btn svg {
  width: 8px;
  height: 10px;
}
.scroll-track {
  flex: 1;
  height: 15px;
  display: flex;
  justify-content: flex-end;
  padding: 0 2px;
  background: linear-gradient(#f2f1ec, #fefefb);
}
.scroll-thumb {
  width: 43.6%;
  display: flex;
  align-items: center;
  justify-content: center;
  background: linear-gradient(#c8d8fc, #c0d2fc 60%, #a8bef0);
  border: 1px solid #98b0e8;
  border-radius: 2px;
}
.scroll-thumb i {
  width: 8px;
  height: 6px;
  background: repeating-linear-gradient(90deg, #eef4fe 0 1px, #8cb0f8 1px 2px);
}
.scroll-tools {
  width: 171px;
  display: flex;
  align-items: center;
  justify-content: space-between;
  padding-left: 7px;
  padding-right: 3px;
}
.scroll-tools svg {
  width: 12px;
  height: 12px;
}
.scroll-tools .sep {
  height: 14px;
}
.daily {
  font-size: 11px;
}

/* bottom toolbar */
.toolrow-bottom {
  height: 31px;
  border-bottom: 1px solid #aca899;
}
.toolrow-bottom .toolbar {
  padding-top: 0;
}
.toolrow-bottom .combo {
  height: 21px;
}
.combo-line {
  width: 130px;
}
.combo-line select,
.combo-weight select {
  background: linear-gradient(#000, #000) center / 75% 1px no-repeat;
}
.combo-weight {
  width: 100px;
}
.toolbar-colors {
  padding-right: 4px;
}
.toolbar-colors .grip {
  margin-right: 8px;
}
.palette {
  display: grid;
  grid-template-columns: repeat(8, 9px);
  gap: 1px;
  padding: 1px;
  background: #aca899;
}
.palette button {
  height: 9px;
  border: 1px solid #ece9d8;
}
.palette .current {
  border-color: #ffb0a0;
}
.c-black { background: #000; }
.c-blue { background: #00f; }
.c-cyan { background: #0ff; }
.c-lime { background: #0f0; }
.c-magenta { background: #f0f; }
.c-red { background: #f00; }
.c-yellow { background: #ff0; }
.c-white { background: #fff; }
.c-navy { background: #000080; }
.c-teal { background: #008080; }
.c-green { background: #008000; }
.c-purple { background: #800080; }
.c-maroon { background: #800000; }
.c-olive { background: #808000; }
.c-gray { background: #808080; }
.c-silver { background: #c0c0c0; }
.more {
  padding: 0 4px;
}
.more svg {
  width: 6px;
  height: 4px;
}
.toolbar-web .grip {
  margin-right: 5px;
}
.symbol {
  width: 62px;
  height: 20px;
  margin-right: 2px;
  padding-left: 2px;
  font-family: "Liberation Sans", Arial, sans-serif;
  font-size: 12px;
  border: 1px solid #fff;
  border-top: 2px solid #8a887c;
  border-left: 2px solid #8a887c;
}
.combo-small {
  width: 80px;
}
.combo-vendor {
  width: 150px;
}
.trade {
  width: 63px;
  height: 20px;
  color: #a8a595;
  background: #f5f4ea;
  border: 1px solid #c9c7ba;
  border-radius: 3px;
}

/* status bar */
.statusbar {
  height: 17px;
  flex: none;
  position: relative;
  display: flex;
  align-items: center;
  box-shadow: inset 0 1px 0 #fff;
}
.statusbar > span {
  line-height: 16px;
}
.status-help {
  flex: 1;
  padding-left: 1px;
}
.status-date {
  width: 61px;
  border-right: 1px solid #c9c5b2;
}
.status-price {
  width: 127px;
  padding-left: 64px;
}
.status-time {
  width: 59px;
  padding-left: 9px;
}
.status-money {
  width: 18px;
  color: #008000;
  font-weight: bold;
}
.status-num {
  width: 27px;
}
.zones {
  position: absolute;
  right: 8px;
  bottom: 0;
  display: flex;
}
.zone {
  width: 46px;
  height: 42px;
  background: rgba(200, 196, 180, 0.5);
  border: 1px solid #716f64;
  text-align: center;
  font-size: 10px;
  line-height: 11px;
  white-space: nowrap;
}
.zone svg {
  width: 40px;
  height: 30px;
  margin: 0 auto;
  opacity: 0.7;
}

/* task bar */
.taskbar {
  height: 30px;
  flex: none;
  display: flex;
  align-items: center;
  color: #fff;
  background: linear-gradient(#3168d5 0, #4993e6 6%, #245ddb 15%, #2663e0 85%, #1941a5 100%);
}
.start {
  width: 110px;
  height: 30px;
  display: flex;
  align-items: center;
  gap: 2px;
  padding-left: 10px;
  border-radius: 0 10px 10px 0;
  background: linear-gradient(#5cae5c 0, #3c8f3c 20%, #379a37 70%, #2c7a2c 100%);
  font-family: "Open Sans", "Noto Sans", sans-serif;
  font-size: 17px;
  font-weight: bold;
  font-style: italic;
  text-shadow: 1px 1px 2px #184018;
}
.start svg {
  width: 22px;
  height: 22px;
}
.tasks {
  flex: 1;
  min-width: 0;
  display: flex;
  gap: 2px;
  padding-left: 9px;
}
.task {
  width: 158px;
  height: 24px;
  display: flex;
  align-items: center;
  gap: 4px;
  padding-left: 9px;
  white-space: nowrap;
  overflow: hidden;
  border-radius: 3px;
  background: linear-gradient(#5c98f8, #3c81f3 20%, #3a7cf0 85%, #2b66d8);
}
.active {
  background: #1e4fb8;
  box-shadow: inset 1px 1px 1px #123a90;
}
.lang {
  padding: 4px 14px 4px 3px;
}
.tray {
  width: 164px;
  height: 30px;
  display: flex;
  align-items: center;
  gap: 2px;
  background: linear-gradient(#19b9f3 0, #0f8eea 12%, #1290ea 85%, #0f6fc8 100%);
  border-left: 1px solid #0a4fa8;
}
.tray-toggle {
  margin-left: -10px;
}
.tray-toggle svg {
  width: 18px;
  height: 18px;
}
.dsl {
  width: 16px;
  height: 16px;
  border-radius: 8px;
  background: #0a7a1a;
  font-size: 8px;
  line-height: 16px;
  text-align: center;
}
.tray time {
  margin-left: 4px;
}
```

FILE: charts.js
```
const SVG_NS = "http://www.w3.org/2000/svg";
const LEFT = 32;
const WIDTH = 1195;
const DAYS = 183;
const STEP = WIDTH / DAYS;

// first trading day of each week: [day index, label]
const weeks = [
  [3, "12"], [7, "19"], [12, "26"], [17, "3"], [22, "10"], [27, "17"], [32, "24"], [37, "31"],
  [42, "7"], [47, "14"], [52, "21"], [57, "28"], [61, ""], [62, "4"], [67, "11"], [72, "18"],
  [77, "25"], [82, "2"], [87, "9"], [92, "16"], [97, "23"], [102, "30"], [107, "6"], [112, "13"],
  [117, "20"], [122, "27"], [126, ""], [127, "4"], [132, "11"], [137, "18"], [142, "27"], [145, ""],
  [149, "8"], [154, "15"], [159, "22"], [164, "29"], [167, ""], [169, "5"], [174, "12"], [179, "19"],
];
const months = [
  [17, "July"], [38, "August"], [61, "September"], [82, "October"], [104, "November"],
  [126, "December"], [145, "2007"], [167, "February"],
];

// one candle per day: direction, high, body top, body bottom, low
const candles = `
u 325 329 338 338|d 322 326 352 352|u 337 341 346 347|d 338 341 347 347|d 349 349 357 367|d 351 362 369 377
d 343 345 374 374|d 357 358 360 370|u 354 358 362 365|d 353 353 354 362|d 350 350 352 357|u 343 349 352 353
d 346 350 358 365|d 351 353 354 359|u 350 354 362 362|d 354 354 357 361|u 345 349 355 355|u 345 348 350 357
u 345 351 353 353|d 349 353 366 367|d 359 359 362 365|d 359 363 365 367|u 360 363 368 368|d 360 362 363 367
u 359 363 366 366|d 363 363 366 373|u 365 372 395 395|d 377 378 380 387|d 377 383 387 396|u 365 367 385 388
d 359 363 370 370|d 365 369 370 377|d 365 373 373 375|u 367 370 375 375|d 363 368 368 371|u 359 366 380 380
d 366 371 373 373|d 367 373 374 378|u 370 371 373 376|d 372 372 380 383|u 370 372 380 380|d 369 372 373 377
d 369 370 372 375|d 368 372 372 375|d 369 371 371 375|u 370 370 375 375|d 370 371 371 376|u 371 371 374 374
d 371 373 375 376|u 370 370 375 377|d 365 372 373 374|u 365 367 373 373|d 367 369 369 372|u 354 367 370 370
d 360 368 370 370|u 360 362 368 368|u 358 361 363 363|d 357 358 360 363|d 355 358 358 363|d 357 358 365 369
d 362 364 364 365|d 362 364 364 366|u 337 338 365 367|d 334 340 342 346|u 330 341 343 343|u 326 333 341 342
u 312 318 333 333|d 314 314 329 329|u 321 322 324 326|u 317 326 329 329|u 322 322 326 328|d 317 326 329 329
d 325 329 331 332|d 329 329 337 340|u 332 332 335 340|d 329 333 333 333|d 329 332 334 336|d 329 332 336 337
u 327 329 337 337|u 291 293 329 329|u 276 283 291 297|u 264 272 289 289|u 270 270 277 284|d 268 268 272 276
d 270 271 275 280|d 272 272 281 281|d 277 280 284 284|u 276 276 283 283|d 276 276 278 283|u 277 277 283 283
d 276 280 280 281|u 275 275 281 281|d 275 276 276 281|d 276 276 278 283|u 258 277 281 283|d 274 277 281 284
u 268 271 280 283|d 274 275 277 281|u 272 274 277 280|u 255 260 274 274|d 251 259 260 266|d 258 258 270 270
d 268 268 275 277|d 275 275 283 283|d 284 289 293 299|u 280 280 286 297|d 277 277 289 289|u 280 287 291 291
u 280 280 287 289|d 283 285 295 295|d 293 296 299 299|d 298 299 299 307|d 295 297 297 303|d 296 296 303 303
u 291 297 303 303|u 293 297 299 300|d 297 297 305 305|d 302 303 307 310|u 304 304 310 310|u 289 297 303 303
u 283 284 296 298|d 283 287 292 298|u 280 284 291 293|u 279 281 289 289|u 274 277 279 279|u 266 268 272 277
d 254 276 278 280|u 262 269 270 272|u 259 262 266 270|u 226 230 259 259|u 225 231 234 243|u 218 221 239 250
d 209 218 225 235|d 226 226 229 237|u 211 213 230 230|u 181 185 218 218|u 184 190 200 200|u 185 192 200 200
u 189 190 193 205|d 189 190 197 200|d 185 192 196 196|u 185 192 199 199|u 181 186 192 192|d 184 185 185 187
u 178 178 185 190|u 152 155 194 194|u 139 145 152 154|u 142 142 150 151|d 142 145 152 152|u 144 152 157 168
u 145 150 157 157|u 148 152 155 159|d 151 155 167 168|u 157 157 165 175|d 156 156 169 171|d 167 171 174 174
d 171 175 178 184|u 164 168 181 181|d 166 175 176 178|d 168 177 177 177|d 175 178 179 181|u 168 176 180 180
d 172 172 178 178|d 173 177 177 182|u 164 165 177 179|u 151 156 165 169|d 151 153 168 168|u 151 153 156 169
u 155 157 163 163|u 147 151 161 161|u 132 136 152 152|u 127 130 135 138`
  .trim()
  .split(/[|\n]/)
  .map((row) => row.split(" "));

const volume = [
  882, 871, 885, 889, 872, 883, 881, 885, 884, 886, 886, 888, 885, 888, 888, 883, 886, 886, 889, 876,
  887, 878, 886, 889, 889, 883, 883, 888, 884, 888, 886, 890, 887, 886, 887, 884, 886, 880, 886, 882,
  881, 885, 887, 886, 888, 888, 888, 892, 890, 888, 889, 891, 890, 886, 889, 889, 888, 892, 889, 887,
  890, 889, 879, 887, 888, 880, 876, 890, 891, 889, 890, 889, 887, 887, 880, 886, 889, 888, 882, 856,
  876, 876, 887, 888, 885, 888, 888, 890, 890, 888, 890, 891, 890, 890, 869, 879, 873, 889, 888, 883,
  886, 888, 889, 888, 878, 885, 889, 888, 887, 887, 878, 881, 881, 881, 866, 884, 884, 885, 886, 879,
  881, 889, 877, 884, 880, 879, 877, 878, 883, 861, 887, 887, 857, 884, 878, 876, 883, 884, 879, 884,
  879, 869, 890, 889, 886, 884, 880, 882, 880, 857, 880, 886, 877, 880, 881, 881, 884, 878, 883, 887,
  887, 881, 884, 883, 884, 881, 881, 885, 884, 885, 882, 887,
];

const panels = {
  price: {
    top: 95, height: 390,
    levels: [137, 196, 239, 300, 324, 360, 377],
    ticks: { from: 119, step: 6.605, major: 2, back: 2 },
    lines: [
      ["green", "32,452 75,446 120,441 165,435 200,433 250,429 300,423 340,418 400,409 470,399 540,388 612,377 700,365 722,361 760,356 800,350 850,343 910,334 960,325 1000,317 1040,309 1100,301 1140,296 1152,295"],
      ["red", "32,333 48,330 100,330 153,332 175,337 202,340 220,347 250,354 283,357 307,359 330,362 360,365 400,367 440,367 475,364 510,360 550,355 580,346 630,332 680,316 705,309 730,304 752,299 780,294 810,292 850,286 880,281 910,276 970,260 1010,247 1050,232 1090,217 1110,210 1152,190"],
      ["blue", "32,337 41,337 45,339 55,343 62,346 80,349 90,354 100,357 115,358 122,360 133,359 146,353 165,354 178,357 200,359 210,364 218,368 230,370 252,372 275,371 300,373 320,373 350,372 375,371 395,369 410,367 435,363 460,352 485,340 496,332 505,329 530,329 545,331 560,321 573,309 590,292 608,275 614,277 630,277 650,279 678,277 695,273 708,272 725,276 738,278 752,285 768,292 785,294 800,300 808,301 830,297 850,291 870,281 890,264 905,248 920,227 938,210 960,199 985,184 1005,169 1022,159 1040,155 1055,160 1075,168 1100,177 1110,173 1132,169 1142,165 1152,158"],
      ["blue", "32,429 1041,267"],
      ["blue", "806,314 1217,123"],
      ["blue", "806,312 1054,125"],
      ["blue", "989,136 1125,186"],
    ],
  },
  macd: {
    top: 508, height: 86,
    levels: [570],
    ticks: { from: 517, step: 2.68, major: 5, back: 3 },
    lines: [
      ["red", "32,576 36,575 42,578 55,578 62,581 75,586 81,587 95,586 103,583 113,582 135,581 146,578 155,577 165,579 180,580 205,581 213,584 218,586 224,584 245,583 270,579 292,580 307,579 320,577 342,576 365,574 390,572 405,570 415,567 435,567 445,561 456,558 467,552 480,549 502,548 512,551 530,554 540,556 545,555 556,548 567,538 577,533 595,532 602,534 615,535 625,538 640,541 655,544 675,547 690,545 703,549 715,556 730,561 742,563 760,571 773,574 790,576 800,578 808,578 825,574 838,570 850,566 865,562 872,560 880,551 895,541 905,538 915,532 925,525 937,521 945,523 970,524 978,523 990,517 997,514 1005,514 1020,518 1040,527 1055,537 1070,545 1085,551 1100,556 1115,555 1130,554 1142,552 1152,546"],
      ["red dashed", "36,573 55,576 65,578 80,582 95,583 120,583 150,581 165,580 205,581 220,582 265,582 290,580 330,579 370,576 395,574 415,570 440,568 460,563 480,557 500,553 525,553 545,555 558,552 575,546 600,539 620,537 640,538 665,542 690,544 710,547 735,555 755,560 775,566 795,571 820,575 845,573 865,569 885,560 905,550 925,540 945,531 960,528 980,526 995,521 1010,519 1035,520 1050,525 1075,536 1100,546 1115,550 1130,552 1145,552 1152,550"],
    ],
  },
  stoch: {
    top: 617, height: 88,
    levels: [634, 687],
    ticks: { from: 617, step: 8.7, major: 5, back: 0 },
    lines: [
      ["black dashed", "32,675 36,666 43,660 49,658 55,670 62,679 70,686 82,687 90,680 100,660 107,648 113,644 120,651 133,665 140,664 148,652 155,647 162,652 168,662 174,680 182,686 190,688 198,683 208,665 215,662 228,662 240,648 248,643 258,647 266,652 278,657 290,670 302,675 310,660 318,645 325,638 333,641 342,650 350,656 360,652 368,647 380,650 392,663 402,666 410,655 420,647 430,662 437,667 445,660 455,640 460,634 470,634 480,638 490,650 500,660 508,675 515,688 525,689 535,678 545,663 555,640 563,628 572,625 584,627 592,636 600,657 608,672 614,673 625,660 640,647 650,658 657,672 664,683 670,682 682,668 690,655 696,650 704,660 712,680 720,690 727,687 738,670 746,663 754,664 763,680 772,684 782,676 792,670 802,672 812,676 820,663 828,640 838,633 850,629 860,636 872,650 882,645 893,631 902,629 912,636 925,634 935,629 945,635 958,650 970,650 980,635 992,624 1002,625 1012,632 1022,641 1032,655 1043,674 1055,686 1066,686 1075,678 1090,680 1098,682 1107,672 1116,653 1125,642 1135,641 1145,635 1152,629"],
      ["red", "32,661 36,650 42,661 49,664 55,685 61,682 68,688 74,690 81,686 88,674 101,646 108,640 115,651 127,670 134,666 146,647 153,638 160,665 166,676 173,690 179,686 185,690 192,685 199,673 205,655 212,661 218,668 225,660 232,650 238,638 245,645 257,652 265,650 271,658 278,663 291,680 303,668 310,640 318,636 323,637 328,642 335,654 342,654 349,661 355,643 362,652 368,644 375,652 381,657 388,672 400,663 407,645 415,643 422,654 434,680 440,649 447,634 453,631 460,634 467,634 474,638 480,644 486,655 493,655 499,665 506,685 512,698 519,688 525,685 531,674 538,674 545,650 552,631 558,624 570,625 578,626 585,630 591,645 597,670 604,680 611,675 617,658 623,661 630,650 636,644 642,644 649,675 656,689 662,682 669,677 682,659 689,646 695,648 702,667 708,688 714,696 721,687 728,680 740,658 748,659 754,671 761,690 767,684 774,681 780,673 787,668 793,666 800,679 807,679 813,662 820,638 827,634 833,630 839,632 846,628 852,627 859,643 866,652 872,656 878,638 885,630 891,625 898,631 904,638 911,640 917,633 924,626 931,628 937,634 943,638 957,657 970,641 983,623 996,623 1002,628 1009,633 1016,642 1022,648 1029,670 1035,668 1042,680 1049,683 1055,694 1061,684 1074,673 1080,684 1087,681 1094,681 1100,678 1107,658 1114,638 1120,642 1127,641 1133,642 1140,630 1147,630 1152,626"],
    ],
  },
  rsi: {
    top: 728, height: 54,
    levels: [744, 780],
    ticks: { from: 762, step: 9, major: 5, back: 3 },
    lines: [
      ["red", "32,763 36,761 42,767 49,764 60,766 68,770 75,772 82,767 95,765 107,763 114,767 120,765 133,766 140,763 150,762 155,764 160,769 167,766 173,769 180,767 195,767 205,771 212,776 218,777 224,766 238,768 245,770 252,767 263,764 270,767 278,768 284,766 290,771 297,766 310,764 328,764 335,766 345,765 356,763 363,764 369,760 375,764 382,760 388,763 394,756 408,753 415,755 420,762 434,760 440,743 447,745 453,746 460,742 466,737 473,747 480,744 486,747 492,746 500,751 512,757 520,754 532,756 538,759 547,752 552,741 563,737 573,736 585,741 595,747 603,744 613,744 623,748 632,745 640,749 650,749 656,752 663,747 668,750 676,750 683,744 689,744 696,752 707,760 714,767 721,760 728,764 735,763 741,759 747,766 753,768 760,769 767,766 773,769 780,766 788,767 794,770 799,771 806,767 813,764 820,757 826,761 833,758 845,755 852,750 859,756 866,752 872,750 878,741 886,741 892,739 900,743 906,743 918,735 925,739 937,740 945,743 958,742 970,740 985,733 996,732 1003,739 1022,741 1029,750 1035,747 1043,754 1054,758 1061,754 1067,759 1080,760 1087,758 1094,760 1100,759 1107,753 1113,750 1120,757 1127,751 1133,753 1140,751 1147,746 1152,745"],
      ["blue", "32,749 355,769"],
      ["blue", "173,781 205,779 645,744"],
    ],
  },
  momentum: {
    top: 805, height: 43,
    levels: [831],
    ticks: { from: 817, step: 2.8, major: 5, back: 4 },
    lines: [
      ["red", "32,826 36,822 42,835 49,829 55,832 61,844 69,844 75,838 87,831 100,835 107,833 114,838 120,833 128,834 134,832 146,825 154,825 160,832 173,833 187,836 193,833 210,836 219,841 225,836 231,836 238,832 245,836 252,833 270,833 284,831 292,831 297,827 303,833 315,831 345,832 353,830 362,831 369,827 375,830 388,831 394,828 415,827 422,829 434,829 440,822 447,824 460,822 466,818 473,823 480,821 486,823 493,821 505,822 512,825 519,829 535,829 544,833 552,822 558,820 565,817 590,817 597,819 603,816 616,816 623,820 630,827 640,832 657,833 663,830 680,827 690,827 702,830 714,835 721,831 728,834 735,832 748,836 761,840 773,839 780,836 793,834 800,837 807,834 822,831 833,827 845,826 852,823 859,826 871,821 878,812 885,814 891,813 898,817 911,815 918,808 925,811 931,813 937,810 950,816 957,822 970,823 983,814 990,817 996,821 1003,822 1016,823 1022,821 1029,824 1035,823 1042,827 1055,832 1067,838 1074,839 1087,836 1100,836 1107,831 1120,831 1127,826 1140,827 1147,822 1152,820"],
    ],
  },
  volume: {
    top: 852, height: 43,
    levels: [],
    ticks: { from: 861, step: 5.2, major: 4, back: 1 },
    lines: [
      ["red", "32,874 52,875 60,876 75,878 110,878 146,879 175,880 210,882 265,882 300,883 345,885 375,886 420,886 432,887 440,886 485,886 490,887 545,887 552,886 625,886 640,887 655,886 710,885 775,884 845,883 890,883 895,884 910,883 950,881 975,881 980,882 1000,881 1040,880 1100,880 1152,881"],
    ],
  },
};

function add(svg, name, attrs) {
  const el = document.createElementNS(SVG_NS, name);
  for (const key in attrs) el.setAttribute(key, attrs[key]);
  svg.appendChild(el);
  return el;
}

// pixel centre of a trading day
function dayX(i) {
  return Math.round(LEFT + (i + 0.5) * STEP) + 0.5;
}

function drawTicks(svg, panel) {
  const { from, step, major, back } = panel.ticks;
  const bottom = panel.top + panel.height;
  svg.setAttribute("viewBox", `0 ${panel.top} 9 ${panel.height}`);
  svg.setAttribute("preserveAspectRatio", "none");
  let d = `M0.5 ${panel.top}V${bottom}`;
  for (let i = -back; from + i * step < bottom; i++) {
    const y = Math.floor(from + i * step) + 0.5;
    d += `M0 ${y}H${i % major === 0 ? 8 : 4}`;
  }
  add(svg, "path", { d, stroke: "#000", fill: "none" });
}

function drawPanel(id) {
  const panel = panels[id];
  const svg = document.getElementById(id);
  const bottom = panel.top + panel.height;
  svg.setAttribute("viewBox", `${LEFT} ${panel.top} ${WIDTH} ${panel.height}`);
  svg.setAttribute("preserveAspectRatio", "none");

  weeks.filter((w) => w[1]).forEach(([i]) => {
    add(svg, "line", { class: "grid", x1: dayX(i), x2: dayX(i), y1: panel.top, y2: bottom });
  });
  if (id === "volume") {
    volume.forEach((top, i) => {
      add(svg, "line", { class: "blue", x1: dayX(i), x2: dayX(i), y1: top, y2: 893 });
    });
  }
  if (id === "price") {
    candles.forEach(([dir, high, top, low, tail], i) => {
      const x = dayX(i);
      const body = low - top;
      add(svg, "path", { class: "black", d: `M${x} ${high}V${+tail + 1}` });
      add(svg, "path", {
        class: dir === "u" ? "up" : "down",
        d: `M${x - 2} ${+top + 0.5}h4v${body}h-4z`,
      });
    });
  }
  panel.levels.forEach((y) => {
    add(svg, "line", { class: "blue", x1: LEFT, x2: LEFT + WIDTH, y1: y + 0.5, y2: y + 0.5 });
  });
  panel.lines.forEach(([cls, points]) => {
    add(svg, "polyline", { class: cls, points, transform: "translate(0.5 0.5)" });
  });
  drawTicks(svg.parentNode.querySelector(".ticks"), panel);
}

// cells grow by the number of days they cover
function drawDates(id, marks, first) {
  const row = document.getElementById(id);
  let start = -0.5;
  let label = first;
  [...marks, [DAYS - 0.5, ""]].forEach(([i, next]) => {
    const cell = document.createElement("span");
    cell.textContent = label;
    cell.style.flexGrow = i - start;
    row.appendChild(cell);
    start = i;
    label = next;
  });
}

Object.keys(panels).forEach(drawPanel);
drawDates("weeks", weeks, "");
drawDates("months", months, "e");

const priceLabels = document.getElementById("priceLabels");
for (let p = 99; p >= 72; p--) {
  const label = document.createElement("span");
  label.textContent = (p / 10).toFixed(1);
  priceLabels.appendChild(label);
}
```
